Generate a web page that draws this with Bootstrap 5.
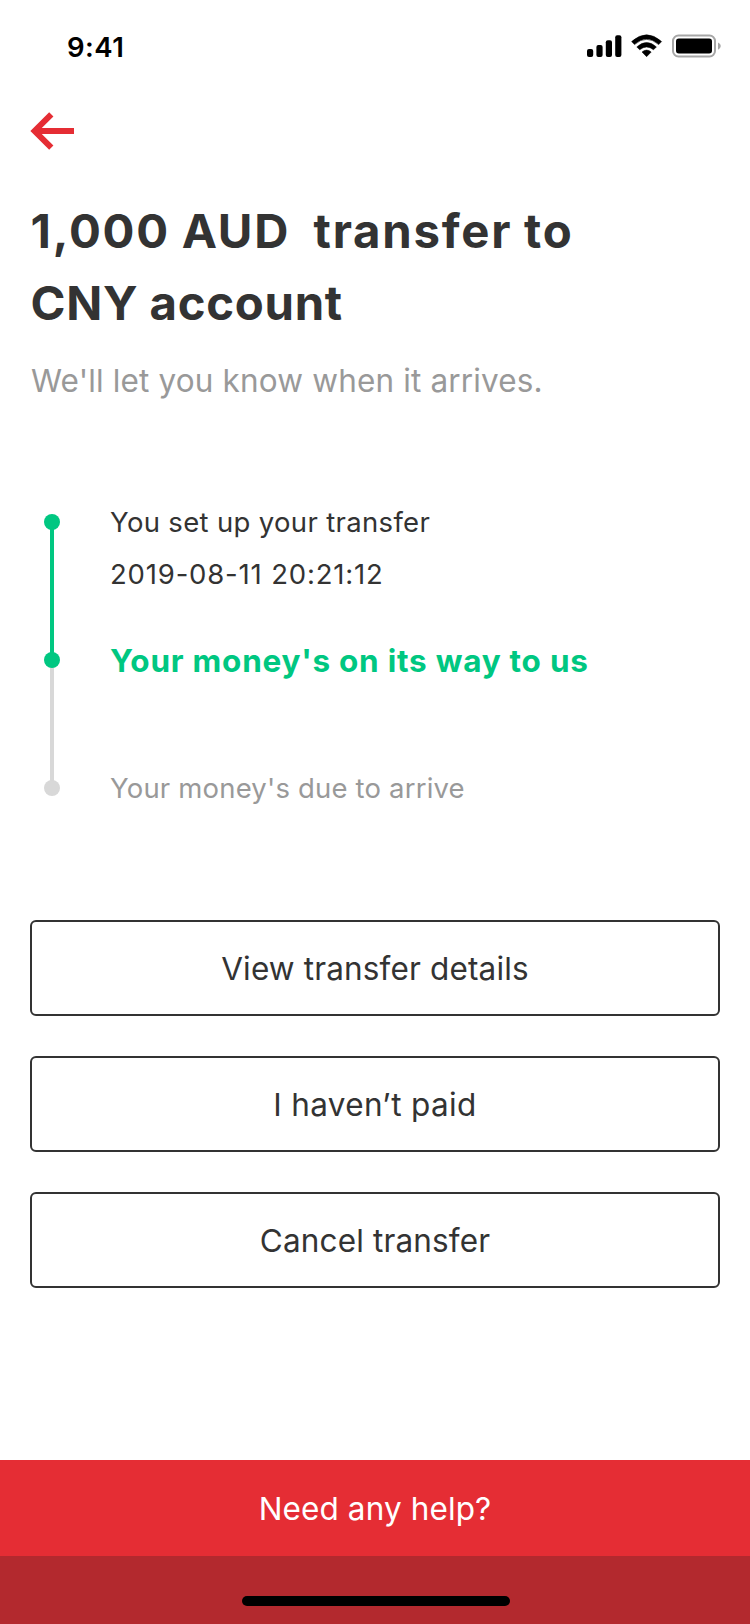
<!DOCTYPE html>
<html lang="en">
<head>
<meta charset="utf-8">
<meta name="viewport" content="width=device-width, initial-scale=1">
<title>Transfer status</title>
<link rel="stylesheet" href="https://cdn.jsdelivr.net/npm/bootstrap@5.3.0/dist/css/bootstrap.min.css">
<style>
body{font-family:Inter,"Liberation Sans",sans-serif;color:#333;background:#fff}
.screen{height:1624px}
.statusbar{height:88px;padding:0 29px 0 67px}
.clock{font-size:27.5px;font-weight:600;line-height:40px;letter-spacing:.5px;color:#000;margin-top:27px}
.signals{margin-top:34px}
.topnav{height:107px;padding:24px 30px 0}
.content{padding:0 30px}
.headline{font-size:47.3px;line-height:72px;font-weight:700;letter-spacing:1.76px;word-spacing:-1.2px;white-space:pre;padding-left:.6px}
.headline .tight{letter-spacing:.7px;word-spacing:-.6px}
.subline{font-size:31.5px;line-height:44px;letter-spacing:.15px;color:#999;margin:20px 0 93px 1px}
.timeline{height:318px}
.rail{width:16px;margin:18px 50px 0 14px}
.dot{width:16px;height:16px;flex:none}
.link{width:4px;margin:-2px 0}
.link-a{height:126px}
.link-b{height:116px}
.on{background:#00c781}
.off{background:#d8d8d8}
.step{font-size:27.5px;line-height:52px;letter-spacing:.33px}
.step-1{height:143px}
.step-2{height:123px;font-size:31.5px;line-height:44px;font-weight:700;letter-spacing:.76px;color:#00c781}
.step-3{color:#999;letter-spacing:.18px}
.stamp{letter-spacing:.82px}
.actions{margin-top:106px;gap:40px}
.btn-box{height:96px;border:2px solid #333;border-radius:6px;color:#333;font-size:31.5px;line-height:46px;letter-spacing:.15px;padding:1px 0 0}
.btn-wide{letter-spacing:.33px}
.help{height:96px;background:#e52d34;color:#fff;font-size:31.5px;letter-spacing:.12px;padding-top:2px}
.homebar{height:68px;background:#b3292e;padding:40px 0 0 242px}
.pill{width:268px;height:10px;background:#000}
</style>
</head>
<body>
<div class="screen d-flex flex-column">
  <header class="statusbar d-flex justify-content-between">
    <div class="clock">9:41</div>
    <svg class="signals" width="134" height="24" viewBox="587 33.7 134 24" aria-hidden="true">
      <rect x="587" y="48.6" width="6.2" height="8" rx="2"/>
      <rect x="596.4" y="44.6" width="6.2" height="12" rx="2"/>
      <rect x="605.8" y="39.9" width="6.2" height="16.7" rx="2"/>
      <rect x="615.2" y="35" width="6.2" height="21.6" rx="2"/>
      <path d="M631.6 41.3Q646.6 27.6 661.6 41.3L658.7 44.3Q646.6 33.8 634.5 44.3ZM636.8 46.6Q646.6 37.8 656.4 46.6L653.5 49.5Q646.6 43.9 639.7 49.5ZM642 51.7Q646.6 47.9 651.2 51.7L646.6 56.4Z" stroke="#000" stroke-width=".5" stroke-linejoin="round"/>
      <rect x="673" y="35.2" width="42" height="21" rx="5.5" fill="none" stroke="#a6a6a6" stroke-width="2"/>
      <rect x="676" y="38.3" width="36" height="14.9" rx="2.8"/>
      <path d="M718 42.2Q720.8 43.4 720.8 45.8T718 49.4Z" fill="#a6a6a6"/>
    </svg>
  </header>
  <nav class="topnav">
    <svg class="d-block" width="45" height="38" viewBox="0 0 45 38" role="img" aria-label="Back">
      <path d="M21.3 2.3L4.6 19L21.3 35.7M5 19H44" fill="none" stroke="#e52d34" stroke-width="6"/>
    </svg>
  </nav>
  <main class="content flex-grow-1">
    <h1 class="headline m-0">1,000 AUD  transfer to
<span class="tight">CNY account</span></h1>
    <p class="subline">We'll let you know when it arrives.</p>
    <section class="timeline d-flex">
      <div class="rail d-flex flex-column align-items-center">
        <div class="dot on rounded-circle"></div>
        <div class="link link-a on"></div>
        <div class="dot on rounded-circle position-relative z-1"></div>
        <div class="link link-b off"></div>
        <div class="dot off rounded-circle"></div>
      </div>
      <div>
        <div class="step step-1">You set up your transfer<div class="stamp">2019-08-11 20:21:12</div></div>
        <div class="step step-2">Your money's on its way to us</div>
        <div class="step step-3">Your money's due to arrive</div>
      </div>
    </section>
    <div class="actions d-flex flex-column">
      <button class="btn btn-box w-100">View transfer details</button>
      <button class="btn btn-box btn-wide w-100">I haven’t paid</button>
      <button class="btn btn-box w-100">Cancel transfer</button>
    </div>
  </main>
  <footer>
    <div class="help d-flex align-items-center justify-content-center">Need any help?</div>
    <div class="homebar"><div class="pill rounded-pill"></div></div>
  </footer>
</div>
<script src="https://cdn.jsdelivr.net/npm/bootstrap@5.3.0/dist/js/bootstrap.bundle.min.js"></script>
</body>
</html>
